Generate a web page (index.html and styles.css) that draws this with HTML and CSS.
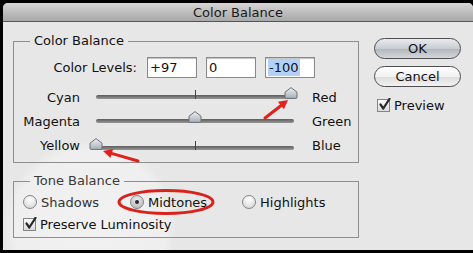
FILE: index.html
```html
<!DOCTYPE html>
<html lang="en">
<head>
  <meta charset="UTF-8">
  <title>Color Balance</title>
  <link rel="stylesheet" href="styles.css">
</head>
<body>
  <div class="screen">
    <div class="window">
      <div class="titlebar">Color Balance</div>
      <div class="content">
        <div class="main">
          <fieldset class="group balance">
            <legend>Color Balance</legend>
            <div class="levels">
              <span class="levels-label">Color Levels:</span>
              <div class="field">+97</div>
              <div class="field">0</div>
              <div class="field"><span class="sel">-100</span></div>
            </div>
            <div class="sliders">
              <span class="lbl-left">Cyan</span>
              <div class="slider">
                <div class="track">
                  <span class="tick"></span>
                  <svg class="thumb" style="left: 98.5%" width="14" height="12" viewBox="0 0 14 12"><use href="#thumb"/></svg>
                </div>
              </div>
              <span class="lbl-right">Red</span>

              <span class="lbl-left">Magenta</span>
              <div class="slider">
                <div class="track">
                  <span class="tick"></span>
                  <svg class="thumb" style="left: 50%" width="14" height="12" viewBox="0 0 14 12"><use href="#thumb"/></svg>
                </div>
              </div>
              <span class="lbl-right">Green</span>

              <span class="lbl-left">Yellow</span>
              <div class="slider">
                <div class="track low">
                  <span class="tick"></span>
                  <svg class="thumb" style="left: 0%" width="14" height="12" viewBox="0 0 14 12"><use href="#thumb"/></svg>
                </div>
              </div>
              <span class="lbl-right">Blue</span>
            </div>
          </fieldset>

          <fieldset class="group tone">
            <legend>Tone Balance</legend>
            <div class="radios">
              <label class="opt opt-1"><span class="radio"></span>Shadows</label>
              <label class="opt opt-2"><span class="radio on"></span>Midtones</label>
              <label class="opt"><span class="radio"></span>Highlights</label>
            </div>
            <label class="check-row"><span class="check"><svg width="13" height="13" viewBox="0 0 13 13"><use href="#tick"/></svg></span>Preserve Luminosity</label>
          </fieldset>
        </div>

        <div class="side">
          <button class="btn btn-default">OK</button>
          <button class="btn">Cancel</button>
          <label class="check-row preview"><span class="check"><svg width="13" height="13" viewBox="0 0 13 13"><use href="#tick"/></svg></span>Preview</label>
        </div>
      </div>

      <!-- red annotations drawn on top of the dialog -->
      <svg class="marks" width="470" height="247" viewBox="0 0 470 247">
        <line x1="262" y1="115" x2="278.5" y2="102.2" stroke="#e3211b" stroke-width="3" stroke-linecap="round"/>
        <polygon points="285,97 280.9,106.3 274.9,98.8" fill="#e3211b"/>
        <line x1="135" y1="158" x2="108.5" y2="150.4" stroke="#e3211b" stroke-width="3" stroke-linecap="round"/>
        <polygon points="100,148 110.1,146 107.5,155" fill="#e3211b"/>
        <ellipse cx="163" cy="199" rx="47" ry="11.5" fill="none" stroke="#d9221c" stroke-width="3"/>
      </svg>
    </div>
  </div>

  <svg width="0" height="0" class="defs">
    <defs>
      <linearGradient id="thumbFill" x1="0" y1="0" x2="0" y2="1">
        <stop offset="0" stop-color="#eef1f4"/>
        <stop offset="1" stop-color="#a7aeb6"/>
      </linearGradient>
      <symbol id="thumb" viewBox="0 0 14 12">
        <path d="M1 5.2 L7 0.6 L13 5.2 L13 10.3 Q13 11.4 11.9 11.4 L2.1 11.4 Q1 11.4 1 10.3 Z" fill="url(#thumbFill)" stroke="#6b7078" stroke-width="1"/>
      </symbol>
      <symbol id="tick" viewBox="0 0 13 13">
        <path d="M2.5 6.5 L5.3 10.5 L11.5 0.8" fill="none" stroke="#2b2b2b" stroke-width="2.2" stroke-linecap="round" stroke-linejoin="round"/>
      </symbol>
    </defs>
  </svg>
</body>
</html>
```

FILE: styles.css
```css
body {
  margin: 0;
  font-family: "DejaVu Sans", "Liberation Sans", sans-serif;
  font-size: 13px;
  color: #111;
}

.screen {
  width: 470px;
  height: 247px;
  padding: 3px 0 3px 3px;
  background: #000;
  overflow: hidden;
}

/* light spot behind the lower-left corner */
.window {
  position: relative;
  height: 247px;
  background:
    radial-gradient(circle 86px at 87px 223px, #f1f1f1 0, #efefef 88%, rgba(231,231,231,0) 100%),
    #e7e7e7;
  border-radius: 5px 5px 0 0;
  overflow: hidden;
}

.titlebar {
  height: 18px;
  line-height: 19px;
  text-align: center;
  font-size: 13px;
  color: #1a1a1a;
  background: linear-gradient(#d6d6d6, #b9b9b9 60%, #a9a9a9);
  border-bottom: 1px solid #555;
}

.content {
  display: flex;
  padding-left: 10px;
}

.main {
  width: 346px;
}

.group {
  margin: 0;
  padding: 0;
  min-width: 0;
  border: 1px solid #8e8e8e;
}

.group legend {
  margin-left: 16px;
  padding: 0 4px;
  line-height: 14px;
  font-size: 13px;
}

.tone legend {
  color: #3a3a3a;
}

.balance {
  margin-top: 12px;
  padding-bottom: 5px;
}

.levels {
  display: flex;
  align-items: center;
  gap: 10px;
  height: 21px;
  margin-top: 9px;
}

.levels-label {
  width: 123px;
  text-align: right;
  white-space: nowrap;
}

.field {
  box-sizing: border-box;
  width: 50px;
  height: 21px;
  padding: 0 2px;
  line-height: 19px;
  background: #fff;
  border: 1px solid #8a8a8a;
  box-shadow: inset 0 1px 1px rgba(0,0,0,0.25);
}

.field + .field {
  margin-left: -1px;
}

.sel {
  display: inline-block;
  background: #b3d1f7;
  padding: 0 1px;
  line-height: 17px;
}

.sliders {
  display: grid;
  grid-template-columns: 66px 212px auto;
  grid-auto-rows: 24px;
  column-gap: 9px;
  align-items: center;
  margin-top: 7px;
}

.lbl-left {
  text-align: right;
}

.lbl-right {
  padding-left: 2px;
}

.slider {
  padding: 0 7px;
}

.track {
  position: relative;
  height: 4px;
  border-radius: 2px;
  background: linear-gradient(#5d5d5d, #979797);
}

.track.low {
  top: 3px;
}

.tick {
  position: absolute;
  left: 50%;
  top: -5px;
  width: 1px;
  height: 9px;
  background: #444;
}

.thumb {
  position: absolute;
  top: -8px;
  margin-left: -7px;
}

.tone {
  margin-top: 11px;
  padding-bottom: 4px;
}

.radios {
  display: flex;
  align-items: center;
  height: 18px;
  margin-top: 5px;
  padding-left: 9px;
}

.opt {
  display: flex;
  align-items: center;
  gap: 4px;
}

.opt-1 {
  width: 107px;
  color: #333;
}

.opt-2 {
  width: 112px;
}

.radio {
  box-sizing: border-box;
  width: 14px;
  height: 14px;
  border-radius: 50%;
  border: 1px solid #858585;
  background: radial-gradient(circle at 50% 30%, #ffffff, #e4e4e4 60%, #c9c9c9);
  position: relative;
}

.radio.on {
  background: radial-gradient(circle at 50% 30%, #e9e9e9, #c4c4c4 70%, #a9a9a9);
}

.radio.on::after {
  content: "";
  position: absolute;
  left: 4px;
  top: 4px;
  width: 4px;
  height: 4px;
  border-radius: 50%;
  background: #2a2a2a;
}

.check-row {
  display: flex;
  align-items: center;
  gap: 4px;
  height: 18px;
  margin-top: 4px;
  padding-left: 9px;
}

.check {
  box-sizing: border-box;
  width: 13px;
  height: 13px;
  border: 1px solid #858585;
  background: linear-gradient(#fdfdfd, #dadada);
  position: relative;
}

.check svg {
  position: absolute;
  left: 0;
  top: -2px;
}

.side {
  display: flex;
  flex-direction: column;
  margin-left: 15px;
  padding-top: 16px;
}

.btn {
  box-sizing: border-box;
  width: 87px;
  height: 21px;
  padding: 0;
  font-family: inherit;
  font-size: 13px;
  color: #111;
  border: 1px solid #4e4e4e;
  border-radius: 11px;
  background: linear-gradient(#ffffff, #f1f1f1 50%, #dedede 55%, #f2f2f2);
}

.btn-default {
  background: linear-gradient(#e9ebee, #c9cdd2 50%, #b3b8be 55%, #d4d8dc);
}

.btn + .btn {
  margin-top: 7px;
}

.preview {
  margin-top: 9px;
  padding-left: 3px;
}

.marks {
  position: absolute;
  left: 0;
  top: 0;
  pointer-events: none;
}

.defs {
  position: absolute;
}
```
